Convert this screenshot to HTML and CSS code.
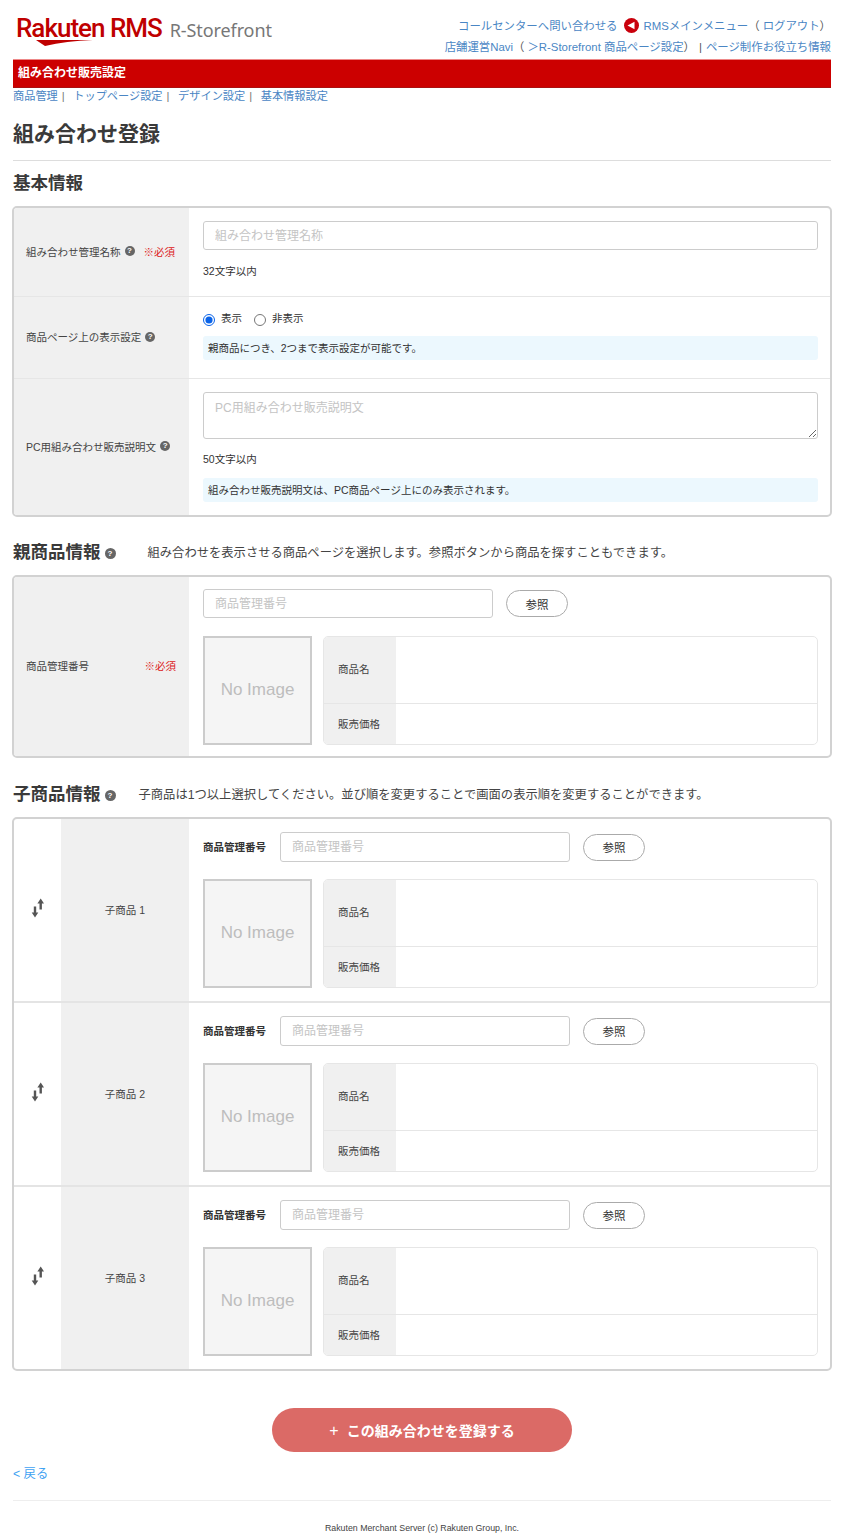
FILE: index.html
```html
<!DOCTYPE html>
<html lang="ja">
<head>
<meta charset="utf-8">
<title>組み合わせ登録</title>
<link rel="stylesheet" href="styles.css">
</head>
<body>
<div class="page">
  <header class="top">
    <div class="logo">
      <span class="logo-main">Rakuten RMS<svg class="swoosh" viewBox="0 0 58 6" width="58" height="6"><path d="M0 0 L57 0 Q30 1 9 6 Z" fill="#bf0000"/></svg></span>
      <span class="logo-sub">R-Storefront</span>
    </div>
    <div class="top-links">
      <div class="top-line">
        <a href="#">コールセンターへ問い合わせる</a>
        <svg class="rms-icon" viewBox="0 0 15 15" width="15" height="15"><circle cx="7.5" cy="7.5" r="7.5" fill="#c9000c"/><path d="M3.5 7.5 L10.5 3.8 V11.2 Z" fill="#fff"/></svg>
        <a href="#">RMSメインメニュー</a><span class="paren paren-open">（</span><a href="#">ログアウト</a><span class="paren">）</span>
      </div>
      <div class="top-line">
        <a href="#">店舗運営Navi</a><span class="paren paren-open">（</span><a href="#">＞R-Storefront 商品ページ設定</a><span class="paren">）</span><span class="bar">|</span><a href="#">ページ制作お役立ち情報</a>
      </div>
    </div>
  </header>
  <div class="redbar">組み合わせ販売設定</div>
  <nav class="subnav">
    <a href="#">商品管理</a><span class="sep">|</span>
    <a href="#">トップページ設定</a><span class="sep">|</span>
    <a href="#">デザイン設定</a><span class="sep">|</span>
    <a href="#">基本情報設定</a>
  </nav>
  <h1 class="title">組み合わせ登録</h1>

  <h2 class="sec sec-first">基本情報</h2>
  <section class="card">
    <div class="row row-a">
      <div class="label"><span>組み合わせ管理名称</span><i class="help">?</i><b class="req">※必須</b></div>
      <div class="body body-a">
        <input class="text" placeholder="組み合わせ管理名称">
        <p class="note note-a">32文字以内</p>
      </div>
    </div>
    <div class="row row-line">
      <div class="label"><span>商品ページ上の表示設定</span><i class="help">?</i></div>
      <div class="body body-b">
        <div class="radios">
          <label><input type="radio" name="show" checked>表示</label>
          <label><input type="radio" name="show">非表示</label>
        </div>
        <p class="info info-b">親商品につき、2つまで表示設定が可能です。</p>
      </div>
    </div>
    <div class="row row-line">
      <div class="label"><span>PC用組み合わせ販売説明文</span><i class="help">?</i></div>
      <div class="body body-a">
        <textarea class="area" placeholder="PC用組み合わせ販売説明文"></textarea>
        <p class="note note-c">50文字以内</p>
        <p class="info info-c">組み合わせ販売説明文は、PC商品ページ上にのみ表示されます。</p>
      </div>
    </div>
  </section>

  <div class="sec-head">
    <h2 class="sec">親商品情報</h2><i class="help help-lg">?</i>
    <p class="desc desc-parent">組み合わせを表示させる商品ページを選択します。参照ボタンから商品を探すこともできます。</p>
  </div>
  <section class="card">
    <div class="row">
      <div class="label"><span>商品管理番号</span><b class="req req-end">※必須</b></div>
      <div class="body body-p">
        <div class="search">
          <input class="text text-p" placeholder="商品管理番号">
          <button class="ref" type="button">参照</button>
        </div>
        <div class="product">
          <div class="noimg">No Image</div>
          <div class="meta">
            <div class="meta-row meta-name"><span>商品名</span></div>
            <div class="meta-row meta-price"><span>販売価格</span></div>
          </div>
        </div>
      </div>
    </div>
  </section>

  <div class="sec-head sec-head-child">
    <h2 class="sec">子商品情報</h2><i class="help help-lg">?</i>
    <p class="desc desc-child">子商品は1つ以上選択してください。並び順を変更することで画面の表示順を変更することができます。</p>
  </div>
  <section class="card">
    <div class="row child">
      <div class="handle"><svg viewBox="0 0 16 22" width="16" height="22"><path d="M10.7 .5L14 5.5H11.9V11.5H9.5V5.5H7.4ZM5 19.5L1.7 14.5H3.8V8.5H6.2V14.5H8.3Z" fill="#555"/></svg></div>
      <div class="child-label">子商品 1</div>
      <div class="body body-c">
        <div class="search">
          <span class="mini">商品管理番号</span>
          <input class="text text-c" placeholder="商品管理番号">
          <button class="ref" type="button">参照</button>
        </div>
        <div class="product product-c">
          <div class="noimg">No Image</div>
          <div class="meta">
            <div class="meta-row meta-name"><span>商品名</span></div>
            <div class="meta-row meta-price"><span>販売価格</span></div>
          </div>
        </div>
      </div>
    </div>
    <div class="row child child-line">
      <div class="handle"><svg viewBox="0 0 16 22" width="16" height="22"><path d="M10.7 .5L14 5.5H11.9V11.5H9.5V5.5H7.4ZM5 19.5L1.7 14.5H3.8V8.5H6.2V14.5H8.3Z" fill="#555"/></svg></div>
      <div class="child-label">子商品 2</div>
      <div class="body body-c">
        <div class="search">
          <span class="mini">商品管理番号</span>
          <input class="text text-c" placeholder="商品管理番号">
          <button class="ref" type="button">参照</button>
        </div>
        <div class="product product-c">
          <div class="noimg">No Image</div>
          <div class="meta">
            <div class="meta-row meta-name"><span>商品名</span></div>
            <div class="meta-row meta-price"><span>販売価格</span></div>
          </div>
        </div>
      </div>
    </div>
    <div class="row child child-line">
      <div class="handle"><svg viewBox="0 0 16 22" width="16" height="22"><path d="M10.7 .5L14 5.5H11.9V11.5H9.5V5.5H7.4ZM5 19.5L1.7 14.5H3.8V8.5H6.2V14.5H8.3Z" fill="#555"/></svg></div>
      <div class="child-label">子商品 3</div>
      <div class="body body-c">
        <div class="search">
          <span class="mini">商品管理番号</span>
          <input class="text text-c" placeholder="商品管理番号">
          <button class="ref" type="button">参照</button>
        </div>
        <div class="product product-c">
          <div class="noimg">No Image</div>
          <div class="meta">
            <div class="meta-row meta-name"><span>商品名</span></div>
            <div class="meta-row meta-price"><span>販売価格</span></div>
          </div>
        </div>
      </div>
    </div>
  </section>

  <div class="submit-wrap"><button class="submit" type="button"><span class="plus">+</span>この組み合わせを登録する</button></div>
  <a class="back" href="#">&lt; 戻る</a>
  <footer class="foot">Rakuten Merchant Server (c) Rakuten Group, Inc.</footer>
</div>
</body>
</html>
```
FILE: styles.css
```css
* { box-sizing: border-box; }
html, body { margin: 0; padding: 0; background: #fff; }
body {
  font-family: "Liberation Sans", "Noto Sans CJK JP", sans-serif;
  color: #333;
  font-size: 10.5px;
  overflow: hidden;
}
.page { width: 844px; height: 1536px; padding: 0 13px; overflow: hidden; }
a { color: #4a86c4; text-decoration: none; }
i { font-style: normal; }
p, h1, h2 { margin: 0; }

/* header */
.top { height: 59px; display: flex; justify-content: space-between; }
.logo { display: flex; align-items: flex-start; padding: 13px 0 0 3px; }
.logo-main {
  position: relative;
  font-family: Roboto, "Liberation Sans", sans-serif;
  font-weight: 500;
  font-size: 26px;
  line-height: 30px;
  letter-spacing: -1px;
  color: #bf0000;
  display: block;
  height: 34px;
}
.swoosh { position: absolute; left: 20px; top: 27px; }
.logo-sub {
  font-family: "Noto Sans", sans-serif;
  font-size: 18px;
  line-height: 30px;
  letter-spacing: -0.1px;
  color: #777;
  margin: 2px 0 0 8px;
}
.top-links { padding-top: 15px; font-size: 11.4px; text-align: right; }
.top-line { height: 21px; line-height: 20px; display: flex; justify-content: flex-end; align-items: center; color: #555; }
.rms-icon { margin: 0 5px 0 6px; }
.paren { color: #555; }
.paren-open { margin-right: 3px; }
.bar { margin: 0 4px; }

.redbar {
  height: 29px;
  background: #cc0000;
  border-top: 1px solid #e88;
  border-bottom: 1px solid #a11;
  color: #fff;
  font-weight: 700;
  font-size: 12px;
  line-height: 26px;
  padding-left: 5px;
}
.subnav { height: 16px; line-height: 17px; font-size: 11.2px; margin-bottom: 16px; color: #777; }
.sep { margin: 0 5.5px 0 4px; }

.title {
  font-size: 21px;
  line-height: 28px;
  font-weight: 700;
  color: #3a3a3a;
  padding-bottom: 12px;
  height: 41px;
  border-bottom: 1px solid #ddd;
  margin-bottom: 10px;
}
.sec { font-size: 17.5px; line-height: 24px; font-weight: 700; color: #3a3a3a; }
.sec-first { margin-bottom: 11px; }
.sec-head { display: flex; align-items: center; height: 24px; margin: 23px 0 11px; }
.sec-head-child { margin-top: 24px; margin-bottom: 11px; }
.desc { font-size: 12.3px; color: #444; }
.desc-parent { margin-left: 32px; }
.desc-child { margin-left: 23px; }

/* cards */
.card { border: 2px solid #d2d2d2; border-radius: 5px; margin: 0 -1px; overflow: hidden; }
.row { display: flex; }
.row-line { border-top: 1px solid #e6e6e6; }
.label {
  width: 175px;
  flex: none;
  background: #f0f0f0;
  padding-left: 12px;
  padding-bottom: 2px;
  display: flex;
  align-items: center;
  color: #444;
  font-size: 10.5px;
}
.help {
  display: inline-block;
  width: 10px;
  height: 10px;
  border-radius: 50%;
  background: #666;
  color: #fff;
  font-size: 8px;
  font-weight: 700;
  line-height: 10px;
  text-align: center;
  margin-left: 4px;
  flex: none;
}
.help-lg { width: 11px; height: 11px; line-height: 11px; margin-left: 4px; margin-top: 2px; }
.req { color: #d22; font-weight: 400; margin-left: 9px; }
.req-end { margin-left: auto; margin-right: 13px; }
.body { flex: 1; min-width: 0; padding-left: 14px; padding-right: 12px; }
.body-a { padding-top: 13px; padding-bottom: 13px; }
.row-a .body-a { padding-bottom: 17px; }
.body-b { padding-top: 13px; padding-bottom: 18px; }
.body-p { padding-top: 12px; padding-bottom: 11px; }
.body-c { padding-top: 13px; padding-bottom: 13px; }

.text, .area {
  display: block;
  width: 100%;
  height: 29px;
  border: 1px solid #ccc;
  border-radius: 3px;
  padding: 0 11px;
  font: inherit;
  font-size: 12px;
  background: #fff;
  color: #333;
  outline: none;
}
.text::placeholder, .area::placeholder { color: #c4c4c4; opacity: 1; }
.area { height: 47px; padding-top: 5px; resize: vertical; }
.text-p { width: 290px; }
.text-c { width: 290px; height: 30px; }
.note { line-height: 16px; font-size: 10.5px; color: #333; }
.note-a { margin-top: 13px; }
.note-c { margin-top: 12px; }
.info {
  height: 24px;
  line-height: 24px;
  background: #ecf8fe;
  border-radius: 3px;
  padding-left: 5px;
  font-size: 10.5px;
  color: #333;
}
.info-b { margin-top: 10px; }
.info-c { margin-top: 11px; }
.radios { display: flex; height: 16px; align-items: center; gap: 12px; line-height: 16px; }
.radios label { display: flex; align-items: center; color: #333; }
.radios input {
  width: 12px;
  height: 12px;
  margin: 3px 6px 0 0;
  accent-color: #0a63e8;
}

.search { display: flex; align-items: center; }
.ref {
  width: 62px;
  height: 27px;
  margin-left: 13px;
  border: 1px solid #aaa;
  border-radius: 14px;
  background: #fff;
  font: inherit;
  font-size: 11.5px;
  color: #333;
  padding: 0;
}
.mini { width: 77px; flex: none; font-weight: 700; font-size: 10.5px; color: #333; padding-bottom: 2px; }
.product { display: flex; margin-top: 18px; gap: 11px; }
.product-c { margin-top: 17px; }
.noimg {
  width: 109px;
  height: 109px;
  flex: none;
  border: 2px solid #ccc;
  background: #f5f5f5;
  color: #bdbdbd;
  font-size: 17px;
  padding-bottom: 2px;
  display: flex;
  align-items: center;
  justify-content: center;
}
.meta { flex: 1; height: 109px; border: 1px solid #e6e6e6; border-radius: 5px; overflow: hidden; }
.meta-row { display: flex; }
.meta-row span {
  width: 72px;
  background: #f0f0f0;
  padding-left: 14px;
  display: flex;
  align-items: center;
  font-size: 10.5px;
  color: #444;
}
.meta-name { height: 66px; }
.meta-name span { padding-bottom: 3px; }
.meta-price { height: 41px; border-top: 1px solid #e6e6e6; }
.meta-price span { padding-bottom: 1px; }

.child { height: 182px; }
.child-line { border-top: 2px solid #e4e4e4; height: 184px; }
.handle { width: 47px; flex: none; display: flex; align-items: center; justify-content: center; padding-bottom: 3px; }
.child-label {
  width: 128px;
  flex: none;
  background: #f0f0f0;
  display: flex;
  align-items: center;
  justify-content: center;
  color: #444;
  padding-bottom: 2px;
}

.submit-wrap { display: flex; justify-content: center; margin-top: 37px; }
.submit {
  width: 300px;
  height: 44px;
  border: 0;
  border-radius: 22px;
  background: #db6a66;
  color: #fff;
  font: inherit;
  font-size: 14px;
  font-weight: 700;
}
.plus { font-weight: 400; font-size: 16px; margin-right: 8px; }
.back { display: block; line-height: 16px; margin-top: 14px; font-size: 12.3px; color: #3fa2f2; }
.foot {
  margin-top: 18px;
  border-top: 1px solid #eee;
  padding-top: 20px;
  text-align: center;
  font-size: 8.8px;
  line-height: 14px;
  color: #444;
}
```
